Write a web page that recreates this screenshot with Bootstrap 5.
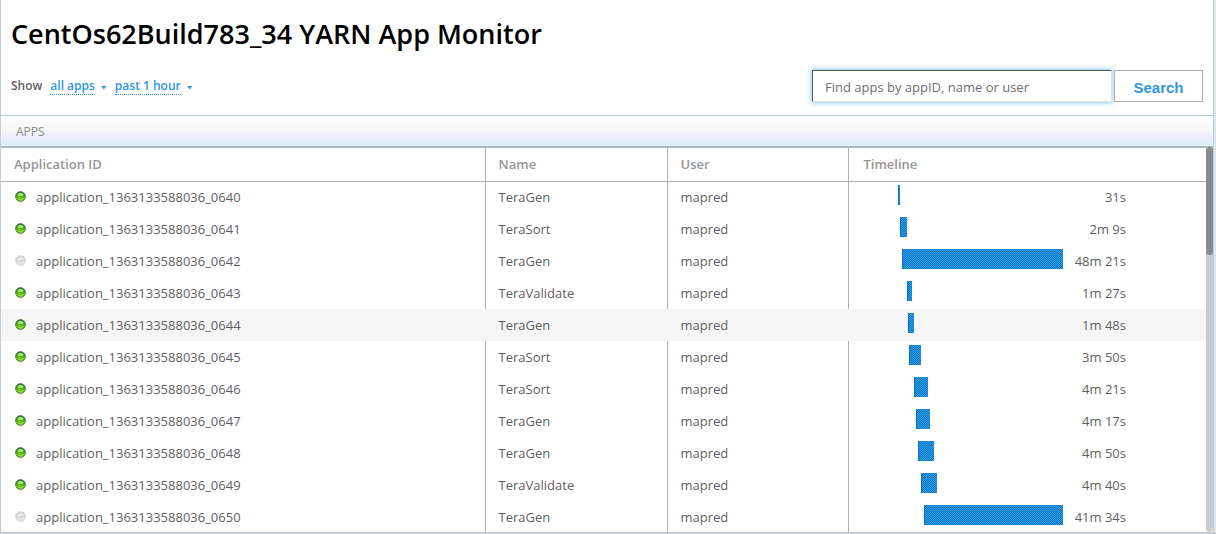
<!DOCTYPE html>
<html lang="en">
<head>
<meta charset="utf-8">
<meta name="viewport" content="width=device-width, initial-scale=1">
<title>YARN App Monitor</title>
<link href="https://cdn.jsdelivr.net/npm/bootstrap@5.3.0/dist/css/bootstrap.min.css" rel="stylesheet">
<style>
body { font-family: "Open Sans", sans-serif; font-size: 13px; line-height: 20px; color: #5f5f5f; background: #c3ced6; padding: 0 0 2px 1px; }
.frame-edge { border-right: 1px solid #b9d0dc; margin-right: 2px; }
.page-edge { background: linear-gradient(to right, #c3ced6 50%, #dfe6ea 50%); }
.monitor-title { font-size: 27px; line-height: 36px; font-weight: 600; color: #000; padding: 16px 10px 0; }
.toolbar-row { padding: 18px 10px 13px; }
.show-filters { font-size: 12px; line-height: 16px; font-weight: 600; gap: 6px; }
.filter-label { margin-right: 2px; }
.filter-link { color: #2f97e0; text-decoration: none; border-bottom: 1px dotted #2f97e0; }
.caret { width: 6px; height: 4px; background: #2f97e0; clip-path: polygon(0 0, 100% 0, 50% 100%); margin: 3px 2px 0 0; }
.find-form { gap: 2px; }
.find-input { width: 300px; height: 32px; padding: 2px 12px 0; font-size: 13px; border: 1px solid #e2e2e2; border-top-color: #555; border-left-color: #555; border-radius: 0; box-shadow: 0 0 5px 1px #8fcdf5; color: #5f5f5f; }
.find-input::placeholder { color: #707070; opacity: 1; }
.search-btn { width: 89px; height: 32px; padding: 2px 0 0; border: 1px solid #b0b0b0; border-radius: 0; background: #fff; color: #2f97e0; font: bold 15px "Liberation Sans", sans-serif; }
.section-bar { height: 33px; padding: 6px 15px 0; margin: 0; font-size: 12px; line-height: 20px; font-weight: 400; color: #8b8b8b; border-top: 1px solid #b9c9d1; border-bottom: 2px solid #a9b9c0; background: linear-gradient(#fff, #f7f7f7 45%, #edeef6 65%, #dff0fa); }
.list-area { min-height: 0; }
.apps-table { table-layout: fixed; margin: 0; color: #5f5f5f; }
.apps-table th, .apps-table td { height: 32px; padding: 0 13px; border: 0; vertical-align: middle; white-space: nowrap; color: inherit; background: transparent; }
.apps-table th { height: 33px; font-weight: 600; color: #969696; border-bottom: 1px solid #b0b0b0; }
.apps-table th:not(:last-child), .apps-table td:not(:last-child) { border-right: 1px solid #b0b0b0; }
.apps-table .timeline-cell { padding: 0 80px 0 14px; }
.apps-table tr.row-hover td { background: #f6f6f6; border-color: #f6f6f6; }
.app-id { gap: 10px; padding-left: 1px; }
.status-dot { width: 11px; height: 11px; margin-top: -2px; }
.col-id { width: 40.17%; } .col-name { width: 15.1%; } .col-user { width: 15.1%; }
.time-bar { height: 20px; background: conic-gradient(#0c76c0 25%, #2b9ee9 0 50%, #0c76c0 0 75%, #2b9ee9 0) 0 0 / 2px 2px; border-left: 1px solid #0a72bd; margin-top: -4px; }
.duration { width: 63px; }
.scroll-track { width: 7px; background: #cbcbcb; border-radius: 0 0 4px 4px; margin-top: -1px; }
.scroll-thumb { height: 28%; background: #8b8b8b; border-radius: 4px; }
</style>
</head>
<body class="vh-100 overflow-hidden">
<svg width="0" height="0" class="position-absolute" aria-hidden="true">
  <defs>
    <linearGradient id="greenFill" x2="0" y2="1"><stop offset="0" stop-color="#2c8a0c"/><stop offset=".5" stop-color="#4fb80f"/><stop offset="1" stop-color="#b0f03c"/></linearGradient>
    <linearGradient id="greyFill" x2="0" y2="1"><stop offset="0" stop-color="#d0d0d0"/><stop offset="1" stop-color="#efefef"/></linearGradient>
    <symbol id="dotOn" viewBox="0 0 11 11"><circle cx="5.5" cy="5.5" r="4.8" fill="url(#greenFill)" stroke="#2b6e18"/><ellipse cx="5.5" cy="3.4" rx="2.8" ry="1.5" fill="#b4e48a"/></symbol>
    <symbol id="dotOff" viewBox="0 0 11 11"><circle cx="5.5" cy="5.5" r="4.8" fill="url(#greyFill)" stroke="#d0d0d0"/><ellipse cx="5.5" cy="3.4" rx="2.8" ry="1.5" fill="#eaeaea"/><path d="M3 6.2h5" stroke="#cfcfcf"/></symbol>
  </defs>
</svg>
<div class="page-edge h-100">
<main class="frame-edge bg-white h-100 d-flex flex-column">
  <h1 class="monitor-title m-0">CentOs62Build783_34 YARN App Monitor</h1>
  <div class="toolbar-row d-flex justify-content-between align-items-center">
    <div class="show-filters d-flex align-items-center">
      <span class="filter-label">Show</span>
      <a class="filter-link" href="#">all apps</a><span class="caret"></span>
      <a class="filter-link" href="#">past 1 hour</a><span class="caret"></span>
    </div>
    <form class="find-form d-flex">
      <input class="find-input form-control" type="search" aria-label="Find apps" placeholder="Find apps by appID, name or user">
      <button class="search-btn" type="button">Search</button>
    </form>
  </div>
  <h2 class="section-bar flex-shrink-0">APPS</h2>
  <div class="list-area d-flex flex-fill">
    <div class="flex-fill overflow-hidden">
      <table class="apps-table table">
        <colgroup><col class="col-id"><col class="col-name"><col class="col-user"><col></colgroup>
        <thead><tr><th scope="col">Application ID</th><th scope="col">Name</th><th scope="col">User</th><th scope="col" class="timeline-cell">Timeline</th></tr></thead>
        <tbody id="appRows"></tbody>
      </table>
    </div>
    <div class="scroll-track flex-shrink-0"><div class="scroll-thumb"></div></div>
  </div>
</main>
</div>
<script src="https://cdn.jsdelivr.net/npm/bootstrap@5.3.0/dist/js/bootstrap.bundle.min.js"></script>
<script>
// id, name, finished, bar start %, bar width %, duration
const apps = [
  ['0640', 'TeraGen', 1, 17.5, 1, '31s'],
  ['0641', 'TeraSort', 1, 18.5, 3.5, '2m 9s'],
  ['0642', 'TeraGen', 0, 19.5, 80.5, '48m 21s'],
  ['0643', 'TeraValidate', 1, 22, 2.5, '1m 27s'],
  ['0644', 'TeraGen', 1, 22.5, 3, '1m 48s'],
  ['0645', 'TeraSort', 1, 23, 6, '3m 50s'],
  ['0646', 'TeraSort', 1, 25.5, 7, '4m 21s'],
  ['0647', 'TeraGen', 1, 26.5, 7, '4m 17s'],
  ['0648', 'TeraGen', 1, 27.5, 8, '4m 50s'],
  ['0649', 'TeraValidate', 1, 29, 8, '4m 40s'],
  ['0650', 'TeraGen', 0, 30.5, 69.5, '41m 34s']
];
document.getElementById('appRows').innerHTML = apps.map(([id, name, on, start, width, time]) => `
  <tr class="${id === '0644' ? 'row-hover' : ''}">
    <td><div class="app-id d-flex align-items-center"><svg class="status-dot flex-shrink-0"><use href="#${on ? 'dotOn' : 'dotOff'}"/></svg><span>application_1363133588036_${id}</span></div></td>
    <td>${name}</td><td>mapred</td>
    <td class="timeline-cell"><div class="d-flex align-items-center"><div class="flex-fill"><div class="time-bar" style="margin-left:${start}%;width:${width}%"></div></div><div class="duration text-end">${time}</div></div></td>
  </tr>`).join('');
</script>
</body>
</html>
